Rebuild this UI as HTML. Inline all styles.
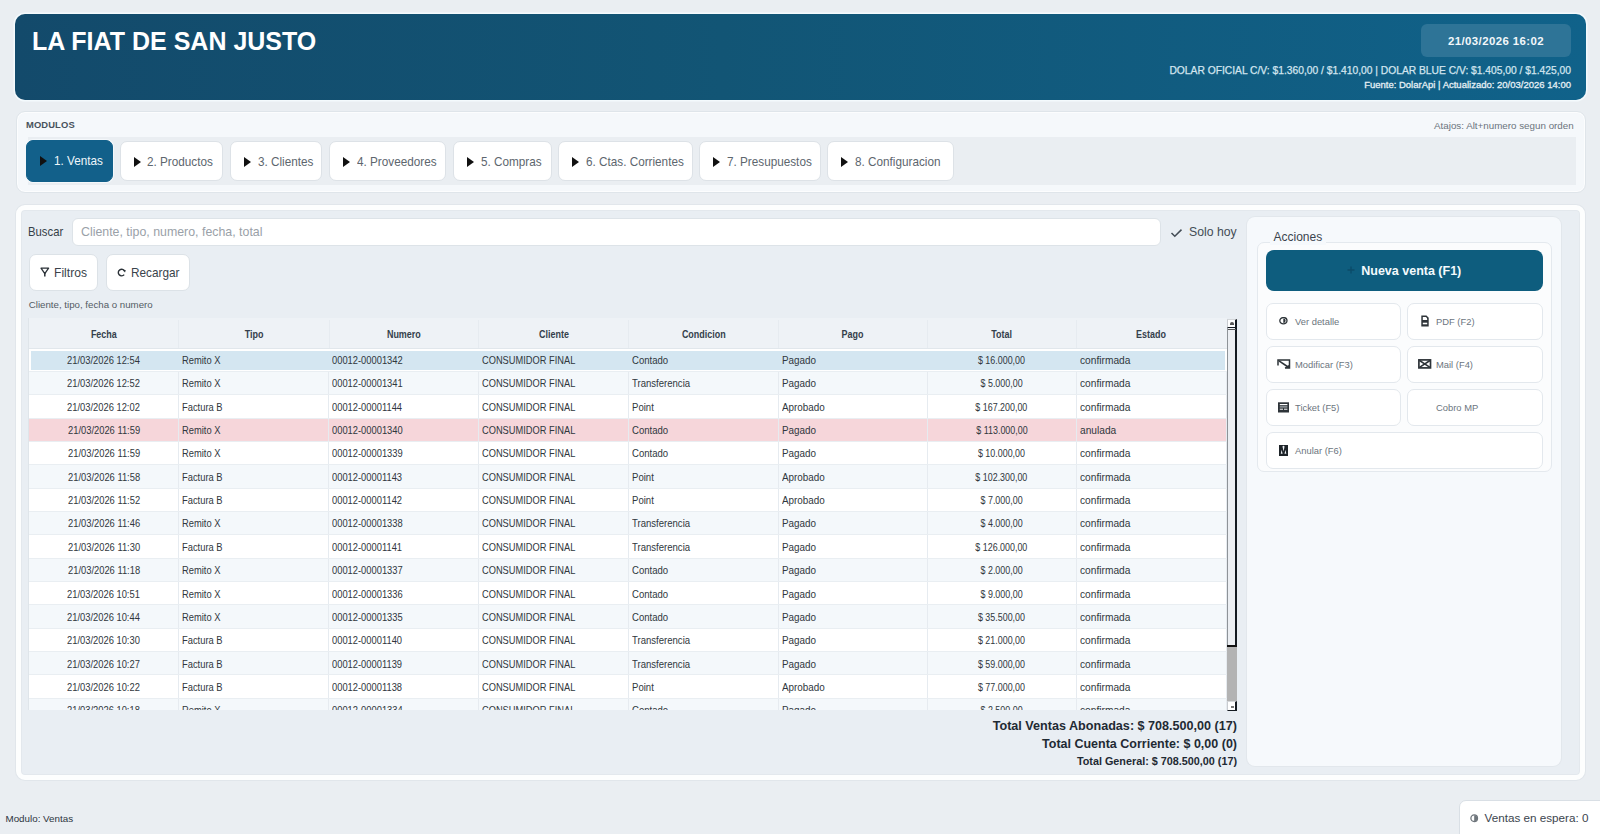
<!DOCTYPE html>
<html><head><meta charset="utf-8">
<style>
*{box-sizing:border-box;margin:0;padding:0}
html,body{width:1600px;height:834px;overflow:hidden}
body{background:#eaeef2;font-family:"Liberation Sans",sans-serif;position:relative;color:#333}
.abs{position:absolute}
#hdr{left:15px;top:13.5px;width:1571px;height:86px;border-radius:10px;
 background:linear-gradient(90deg,#134a6b 0%,#125575 45%,#10628a 100%);
 box-shadow:0 0 0 1.5px #f4fafd}
#title{left:32px;top:26px;font-size:25px;font-weight:700;color:#fff;white-space:nowrap;line-height:30px}
#datebox{left:1421px;top:24px;width:150px;height:33px;padding-top:1px;border-radius:6px;background:#2e7497;
 color:#f3f8fb;font-weight:700;font-size:11.4px;letter-spacing:0.42px;text-align:center;line-height:33px}
#dolar{right:29px;top:65px;font-size:10.28px;font-weight:400;color:#d3e5ef;-webkit-text-stroke:0.25px #d3e5ef;white-space:nowrap;line-height:12px}
#fuente{right:29px;top:79px;font-size:9.5px;font-weight:400;color:#e4eff5;-webkit-text-stroke:0.3px #e4eff5;white-space:nowrap;line-height:11px}

#mod{left:15.5px;top:111px;width:1570px;height:82px;border-radius:9px;background:#f5f8fb;border:1px solid #dfe5ea;box-shadow:inset 0 0 0 1px #fcfdfe}
#modlbl{left:26px;top:119.2px;font-size:9.4px;font-weight:700;color:#48525c;letter-spacing:.12px;line-height:11px}
#atajos{left:1434px;top:120px;font-size:9.8px;color:#6b747d;line-height:11px;white-space:nowrap}
#strip{left:28px;top:137px;width:1548px;height:48px;background:#eaeef2}
.tab{position:absolute;top:140.5px;height:40px;border-radius:7px;background:#fff;border:1px solid #dde2e7;
 font-size:12.9px;color:#5d666e;line-height:39px;white-space:nowrap}
.tab > span:last-child{transform:scaleX(0.91);transform-origin:0 50%}
.tab .tri{position:absolute;top:15px;width:0;height:0;border-top:5px solid transparent;border-bottom:5px solid transparent;border-left:7px solid #111}
.tab.on{background:#12608a;border-color:#12608a;color:#eef6fa;top:140px;height:41.5px;line-height:40px;box-shadow:0 0 0 1px #f4f8fb}

#main{left:16px;top:205px;width:1569px;height:575px;border-radius:9px;background:#e9eef3;border:5px solid #fdfefe;box-shadow:0 0 0 1px #e1e6eb,inset 0 0 0 1px #e3e8ed}

#search{left:72px;top:217.5px;width:1089px;height:28.5px;border-radius:6px;background:#fff;border:1px solid #dde3e8;
 font-size:13.3px;color:#9aa1a8;line-height:26.5px;padding-left:8px;white-space:nowrap}
#search span{display:inline-block;transform:scaleX(0.93);transform-origin:0 50%}
#buscar{left:27.5px;top:223.5px;font-size:13.3px;color:#353f48;line-height:16px;transform:scaleX(0.85);transform-origin:0 50%}
#solo{left:1189px;top:224.5px;font-size:12.5px;color:#434c55;line-height:15px;white-space:nowrap;transform:scaleX(0.98);transform-origin:0 50%}
.btn{position:absolute;background:#fff;border:1px solid #dce2e7;border-radius:7px;white-space:nowrap}
#filtros{left:29px;top:254px;width:68.5px;height:37px}
#recargar{left:106px;top:254px;width:84px;height:37px}
.btxt{position:absolute;font-size:12.9px;color:#3a434b;line-height:15px;transform-origin:0 50%}
#helper{left:28.8px;top:299.3px;font-size:9.7px;color:#535b63;line-height:11px;white-space:nowrap}
#tbl{background:#fff;border-left:1px solid #dfe5ea}
#thead{background:#eef2f6;border-bottom:1px solid #e1e7ec}
.th{position:absolute;top:327.5px;font-size:10.3px;font-weight:700;color:#34404b;text-align:center;line-height:14px;transform:scaleX(0.87)}
.row{position:absolute;left:0;width:1197.6px;height:23.35px;background:#fff;border-bottom:1px solid #e9eef2}
.row.odd{background:#f4f8fb}
.row.anu{background:#f6d6da}
.row.sel{background:#fff}
.row.sel::before{content:"";position:absolute;left:2px;right:2px;top:2.5px;bottom:1px;background:#d4e6f1}
.td{position:absolute;top:0;height:22.35px;padding-top:5.5px;font-size:10.4px;color:#30373d;line-height:14px;padding-left:3.3px;white-space:nowrap}
.td{border-right:1px solid #e6ebf0}
.sel .td{border-right-color:transparent}
.td span{display:inline-block;transform:scaleX(0.9);transform-origin:0 50%}
.td.c span{transform-origin:50% 50%}
.td.c{text-align:center;padding-left:0}
.vsep{position:absolute;width:1px;background:#e6ebf0}
#sbar{left:1227px;top:318.5px;width:10px;height:392px;background:#eceff3;border-left:1.2px solid #8e9398;border-right:2px solid #141a20}
.sbox{position:absolute;left:1227px;width:10px;height:9.3px;background:#fff;border-left:1px solid #c9ccd0;border-top:1px solid #d5d8db;border-right:2px solid #141a20;border-bottom:1.8px solid #141a20}
#sthumb{left:1227px;top:647px;width:10px;height:53.5px;background:#b3b3b3}
#totals{right:363px;top:717px;text-align:right;font-weight:700;color:#1f2a33;white-space:nowrap}
#acc{left:1247px;top:217px;width:314px;height:549px;border-radius:8px;background:#f6f9fc;box-shadow:0 0 0 1px #e2e7ec}
#accfr{left:1257px;top:242px;width:295px;height:230px;border-radius:7px;background:#fbfcfd;border:1px solid #e4e9ee}
#acclbl{left:1269.5px;top:228.5px;padding:0 4px;background:#f6f9fc;font-size:12px;color:#3b454e;line-height:16px}
#nueva{left:1266px;top:250px;width:276.5px;height:41px;border-radius:8px;background:#0e5d7e;color:#f4fafd;font-weight:700;font-size:12.5px;line-height:43px;text-align:center;padding-left:14px}
.ab{position:absolute;height:37px;background:#fff;border:1px solid #e3e8ed;border-radius:7px;font-size:9.4px;color:#6c757e;line-height:35px;white-space:nowrap}
.ab span{position:absolute;left:28px}
#modulo{left:5.5px;top:813px;font-size:9.8px;color:#2c353e;line-height:11px}
#espera{left:1458.5px;top:799.5px;width:150px;height:50px;border-radius:7px;background:#fff;border:1px solid #d9dfe5}
#esptxt{left:1484.5px;top:811px;font-size:11.7px;color:#3c454e;line-height:14px;white-space:nowrap}
</style></head><body>
<div id="hdr" class="abs"></div>
<div id="title" class="abs">LA FIAT DE SAN JUSTO</div>
<div id="datebox" class="abs">21/03/2026 16:02</div>
<div id="dolar" class="abs">DOLAR OFICIAL C/V: $1.360,00 / $1.410,00 | DOLAR BLUE C/V: $1.405,00 / $1.425,00</div>
<div id="fuente" class="abs">Fuente: DolarApi | Actualizado: 20/03/2026 14:00</div>

<div id="mod" class="abs"></div>
<div id="modlbl" class="abs">MODULOS</div>
<div id="atajos" class="abs">Atajos: Alt+numero segun orden</div>
<div id="strip" class="abs"></div>
<div class="tab on" style="left:26px;width:87px"><span class="tri" style="left:13px;top:15px"></span><span style="position:absolute;left:27px">1. Ventas</span></div>
<div class="tab" style="left:120px;width:103px"><span class="tri" style="left:13px"></span><span style="position:absolute;left:26px">2. Productos</span></div>
<div class="tab" style="left:230px;width:92px"><span class="tri" style="left:13px"></span><span style="position:absolute;left:27px">3. Clientes</span></div>
<div class="tab" style="left:329px;width:117px"><span class="tri" style="left:13px"></span><span style="position:absolute;left:27px">4. Proveedores</span></div>
<div class="tab" style="left:453px;width:99px"><span class="tri" style="left:13px"></span><span style="position:absolute;left:27px">5. Compras</span></div>
<div class="tab" style="left:558px;width:135px"><span class="tri" style="left:13px"></span><span style="position:absolute;left:27px">6. Ctas. Corrientes</span></div>
<div class="tab" style="left:699px;width:122px"><span class="tri" style="left:13px"></span><span style="position:absolute;left:27px">7. Presupuestos</span></div>
<div class="tab" style="left:827px;width:127px"><span class="tri" style="left:13px"></span><span style="position:absolute;left:27px">8. Configuracion</span></div>

<div id="main" class="abs"></div>

<div id="buscar" class="abs">Buscar</div>
<div id="search" class="abs"><span>Cliente, tipo, numero, fecha, total</span></div>
<svg class="abs" style="left:1170px;top:228px" width="13" height="10" viewBox="0 0 13 10"><path d="M1.5 5 L4.8 8.3 L11.5 1.6" fill="none" stroke="#434c55" stroke-width="1.5"/></svg>
<div id="solo" class="abs">Solo hoy</div>
<div id="filtros" class="btn"></div>
<svg class="abs" style="left:40px;top:267px" width="10" height="10" viewBox="0 0 10 10"><path d="M1 1.2 H8.6 L4.8 6.6 Z" fill="none" stroke="#2a3137" stroke-width="1.3" stroke-linejoin="round"/><path d="M4.8 6 V9.5" stroke="#2a3137" stroke-width="1.5"/></svg>
<div class="btxt abs" style="left:53.5px;top:265px;transform:scaleX(0.94)">Filtros</div>
<div id="recargar" class="btn"></div>
<svg class="abs" style="left:117px;top:267.5px" width="10" height="9" viewBox="0 0 10 9"><path d="M7.6 3.2 A3.3 3.3 0 1 0 7.2 6.6" fill="none" stroke="#2a3137" stroke-width="1.4"/><path d="M5.6 1.5 L8.8 2.2 L8 4.6 Z" fill="#2a3137"/></svg>
<div class="btxt abs" style="left:130.5px;top:265px;transform:scaleX(0.915)">Recargar</div>
<div id="helper" class="abs">Cliente, tipo, fecha o numero</div>
<div class="abs" id="tbl" style="left:28.0px;top:317.5px;width:1198.5px;height:392.70000000000005px"></div>
<div class="abs" id="thead" style="left:29.0px;top:317.5px;width:1197.5px;height:31.0px"></div>
<div class="th" style="left:29.0px;width:149.7px">Fecha</div>
<div class="th" style="left:178.7px;width:150.3px">Tipo</div>
<div class="th" style="left:329.0px;width:149.7px">Numero</div>
<div class="th" style="left:478.7px;width:150.0px">Cliente</div>
<div class="th" style="left:628.7px;width:149.6px">Condicion</div>
<div class="th" style="left:778.3px;width:148.9px">Pago</div>
<div class="th" style="left:927.2px;width:149.2px">Total</div>
<div class="th" style="left:1076.4px;width:150.1px">Estado</div>
<div class="abs" style="left:29.0px;top:348.5px;width:1197.5px;height:361.70000000000005px;overflow:hidden">
<div class="row sel" style="top:0.00px">
<div class="td c" style="left:0.0px;width:150.2px"><span style="transform:scaleX(0.9)">21/03/2026 12:54</span></div>
<div class="td" style="left:149.7px;width:150.8px"><span style="transform:scaleX(0.9)">Remito X</span></div>
<div class="td" style="left:300.0px;width:150.2px"><span style="transform:scaleX(0.9)">00012-00001342</span></div>
<div class="td" style="left:449.7px;width:150.5px"><span style="transform:scaleX(0.893)">CONSUMIDOR FINAL</span></div>
<div class="td" style="left:599.7px;width:150.1px"><span style="transform:scaleX(0.92)">Contado</span></div>
<div class="td" style="left:749.3px;width:149.4px"><span style="transform:scaleX(0.95)">Pagado</span></div>
<div class="td c" style="left:898.2px;width:149.7px"><span style="transform:scaleX(0.856)">$ 16.000,00</span></div>
<div class="td" style="left:1047.4px;width:150.6px"><span style="transform:scaleX(0.98)">confirmada</span></div>
</div>
<div class="row odd" style="top:23.35px">
<div class="td c" style="left:0.0px;width:150.2px"><span style="transform:scaleX(0.9)">21/03/2026 12:52</span></div>
<div class="td" style="left:149.7px;width:150.8px"><span style="transform:scaleX(0.9)">Remito X</span></div>
<div class="td" style="left:300.0px;width:150.2px"><span style="transform:scaleX(0.9)">00012-00001341</span></div>
<div class="td" style="left:449.7px;width:150.5px"><span style="transform:scaleX(0.893)">CONSUMIDOR FINAL</span></div>
<div class="td" style="left:599.7px;width:150.1px"><span style="transform:scaleX(0.92)">Transferencia</span></div>
<div class="td" style="left:749.3px;width:149.4px"><span style="transform:scaleX(0.95)">Pagado</span></div>
<div class="td c" style="left:898.2px;width:149.7px"><span style="transform:scaleX(0.856)">$ 5.000,00</span></div>
<div class="td" style="left:1047.4px;width:150.6px"><span style="transform:scaleX(0.98)">confirmada</span></div>
</div>
<div class="row" style="top:46.70px">
<div class="td c" style="left:0.0px;width:150.2px"><span style="transform:scaleX(0.9)">21/03/2026 12:02</span></div>
<div class="td" style="left:149.7px;width:150.8px"><span style="transform:scaleX(0.9)">Factura B</span></div>
<div class="td" style="left:300.0px;width:150.2px"><span style="transform:scaleX(0.9)">00012-00001144</span></div>
<div class="td" style="left:449.7px;width:150.5px"><span style="transform:scaleX(0.893)">CONSUMIDOR FINAL</span></div>
<div class="td" style="left:599.7px;width:150.1px"><span style="transform:scaleX(0.92)">Point</span></div>
<div class="td" style="left:749.3px;width:149.4px"><span style="transform:scaleX(0.95)">Aprobado</span></div>
<div class="td c" style="left:898.2px;width:149.7px"><span style="transform:scaleX(0.856)">$ 167.200,00</span></div>
<div class="td" style="left:1047.4px;width:150.6px"><span style="transform:scaleX(0.98)">confirmada</span></div>
</div>
<div class="row anu" style="top:70.05px">
<div class="td c" style="left:0.0px;width:150.2px"><span style="transform:scaleX(0.9)">21/03/2026 11:59</span></div>
<div class="td" style="left:149.7px;width:150.8px"><span style="transform:scaleX(0.9)">Remito X</span></div>
<div class="td" style="left:300.0px;width:150.2px"><span style="transform:scaleX(0.9)">00012-00001340</span></div>
<div class="td" style="left:449.7px;width:150.5px"><span style="transform:scaleX(0.893)">CONSUMIDOR FINAL</span></div>
<div class="td" style="left:599.7px;width:150.1px"><span style="transform:scaleX(0.92)">Contado</span></div>
<div class="td" style="left:749.3px;width:149.4px"><span style="transform:scaleX(0.95)">Pagado</span></div>
<div class="td c" style="left:898.2px;width:149.7px"><span style="transform:scaleX(0.856)">$ 113.000,00</span></div>
<div class="td" style="left:1047.4px;width:150.6px"><span style="transform:scaleX(0.98)">anulada</span></div>
</div>
<div class="row" style="top:93.40px">
<div class="td c" style="left:0.0px;width:150.2px"><span style="transform:scaleX(0.9)">21/03/2026 11:59</span></div>
<div class="td" style="left:149.7px;width:150.8px"><span style="transform:scaleX(0.9)">Remito X</span></div>
<div class="td" style="left:300.0px;width:150.2px"><span style="transform:scaleX(0.9)">00012-00001339</span></div>
<div class="td" style="left:449.7px;width:150.5px"><span style="transform:scaleX(0.893)">CONSUMIDOR FINAL</span></div>
<div class="td" style="left:599.7px;width:150.1px"><span style="transform:scaleX(0.92)">Contado</span></div>
<div class="td" style="left:749.3px;width:149.4px"><span style="transform:scaleX(0.95)">Pagado</span></div>
<div class="td c" style="left:898.2px;width:149.7px"><span style="transform:scaleX(0.856)">$ 10.000,00</span></div>
<div class="td" style="left:1047.4px;width:150.6px"><span style="transform:scaleX(0.98)">confirmada</span></div>
</div>
<div class="row odd" style="top:116.75px">
<div class="td c" style="left:0.0px;width:150.2px"><span style="transform:scaleX(0.9)">21/03/2026 11:58</span></div>
<div class="td" style="left:149.7px;width:150.8px"><span style="transform:scaleX(0.9)">Factura B</span></div>
<div class="td" style="left:300.0px;width:150.2px"><span style="transform:scaleX(0.9)">00012-00001143</span></div>
<div class="td" style="left:449.7px;width:150.5px"><span style="transform:scaleX(0.893)">CONSUMIDOR FINAL</span></div>
<div class="td" style="left:599.7px;width:150.1px"><span style="transform:scaleX(0.92)">Point</span></div>
<div class="td" style="left:749.3px;width:149.4px"><span style="transform:scaleX(0.95)">Aprobado</span></div>
<div class="td c" style="left:898.2px;width:149.7px"><span style="transform:scaleX(0.856)">$ 102.300,00</span></div>
<div class="td" style="left:1047.4px;width:150.6px"><span style="transform:scaleX(0.98)">confirmada</span></div>
</div>
<div class="row" style="top:140.10px">
<div class="td c" style="left:0.0px;width:150.2px"><span style="transform:scaleX(0.9)">21/03/2026 11:52</span></div>
<div class="td" style="left:149.7px;width:150.8px"><span style="transform:scaleX(0.9)">Factura B</span></div>
<div class="td" style="left:300.0px;width:150.2px"><span style="transform:scaleX(0.9)">00012-00001142</span></div>
<div class="td" style="left:449.7px;width:150.5px"><span style="transform:scaleX(0.893)">CONSUMIDOR FINAL</span></div>
<div class="td" style="left:599.7px;width:150.1px"><span style="transform:scaleX(0.92)">Point</span></div>
<div class="td" style="left:749.3px;width:149.4px"><span style="transform:scaleX(0.95)">Aprobado</span></div>
<div class="td c" style="left:898.2px;width:149.7px"><span style="transform:scaleX(0.856)">$ 7.000,00</span></div>
<div class="td" style="left:1047.4px;width:150.6px"><span style="transform:scaleX(0.98)">confirmada</span></div>
</div>
<div class="row odd" style="top:163.45px">
<div class="td c" style="left:0.0px;width:150.2px"><span style="transform:scaleX(0.9)">21/03/2026 11:46</span></div>
<div class="td" style="left:149.7px;width:150.8px"><span style="transform:scaleX(0.9)">Remito X</span></div>
<div class="td" style="left:300.0px;width:150.2px"><span style="transform:scaleX(0.9)">00012-00001338</span></div>
<div class="td" style="left:449.7px;width:150.5px"><span style="transform:scaleX(0.893)">CONSUMIDOR FINAL</span></div>
<div class="td" style="left:599.7px;width:150.1px"><span style="transform:scaleX(0.92)">Transferencia</span></div>
<div class="td" style="left:749.3px;width:149.4px"><span style="transform:scaleX(0.95)">Pagado</span></div>
<div class="td c" style="left:898.2px;width:149.7px"><span style="transform:scaleX(0.856)">$ 4.000,00</span></div>
<div class="td" style="left:1047.4px;width:150.6px"><span style="transform:scaleX(0.98)">confirmada</span></div>
</div>
<div class="row" style="top:186.80px">
<div class="td c" style="left:0.0px;width:150.2px"><span style="transform:scaleX(0.9)">21/03/2026 11:30</span></div>
<div class="td" style="left:149.7px;width:150.8px"><span style="transform:scaleX(0.9)">Factura B</span></div>
<div class="td" style="left:300.0px;width:150.2px"><span style="transform:scaleX(0.9)">00012-00001141</span></div>
<div class="td" style="left:449.7px;width:150.5px"><span style="transform:scaleX(0.893)">CONSUMIDOR FINAL</span></div>
<div class="td" style="left:599.7px;width:150.1px"><span style="transform:scaleX(0.92)">Transferencia</span></div>
<div class="td" style="left:749.3px;width:149.4px"><span style="transform:scaleX(0.95)">Pagado</span></div>
<div class="td c" style="left:898.2px;width:149.7px"><span style="transform:scaleX(0.856)">$ 126.000,00</span></div>
<div class="td" style="left:1047.4px;width:150.6px"><span style="transform:scaleX(0.98)">confirmada</span></div>
</div>
<div class="row odd" style="top:210.15px">
<div class="td c" style="left:0.0px;width:150.2px"><span style="transform:scaleX(0.9)">21/03/2026 11:18</span></div>
<div class="td" style="left:149.7px;width:150.8px"><span style="transform:scaleX(0.9)">Remito X</span></div>
<div class="td" style="left:300.0px;width:150.2px"><span style="transform:scaleX(0.9)">00012-00001337</span></div>
<div class="td" style="left:449.7px;width:150.5px"><span style="transform:scaleX(0.893)">CONSUMIDOR FINAL</span></div>
<div class="td" style="left:599.7px;width:150.1px"><span style="transform:scaleX(0.92)">Contado</span></div>
<div class="td" style="left:749.3px;width:149.4px"><span style="transform:scaleX(0.95)">Pagado</span></div>
<div class="td c" style="left:898.2px;width:149.7px"><span style="transform:scaleX(0.856)">$ 2.000,00</span></div>
<div class="td" style="left:1047.4px;width:150.6px"><span style="transform:scaleX(0.98)">confirmada</span></div>
</div>
<div class="row" style="top:233.50px">
<div class="td c" style="left:0.0px;width:150.2px"><span style="transform:scaleX(0.9)">21/03/2026 10:51</span></div>
<div class="td" style="left:149.7px;width:150.8px"><span style="transform:scaleX(0.9)">Remito X</span></div>
<div class="td" style="left:300.0px;width:150.2px"><span style="transform:scaleX(0.9)">00012-00001336</span></div>
<div class="td" style="left:449.7px;width:150.5px"><span style="transform:scaleX(0.893)">CONSUMIDOR FINAL</span></div>
<div class="td" style="left:599.7px;width:150.1px"><span style="transform:scaleX(0.92)">Contado</span></div>
<div class="td" style="left:749.3px;width:149.4px"><span style="transform:scaleX(0.95)">Pagado</span></div>
<div class="td c" style="left:898.2px;width:149.7px"><span style="transform:scaleX(0.856)">$ 9.000,00</span></div>
<div class="td" style="left:1047.4px;width:150.6px"><span style="transform:scaleX(0.98)">confirmada</span></div>
</div>
<div class="row odd" style="top:256.85px">
<div class="td c" style="left:0.0px;width:150.2px"><span style="transform:scaleX(0.9)">21/03/2026 10:44</span></div>
<div class="td" style="left:149.7px;width:150.8px"><span style="transform:scaleX(0.9)">Remito X</span></div>
<div class="td" style="left:300.0px;width:150.2px"><span style="transform:scaleX(0.9)">00012-00001335</span></div>
<div class="td" style="left:449.7px;width:150.5px"><span style="transform:scaleX(0.893)">CONSUMIDOR FINAL</span></div>
<div class="td" style="left:599.7px;width:150.1px"><span style="transform:scaleX(0.92)">Contado</span></div>
<div class="td" style="left:749.3px;width:149.4px"><span style="transform:scaleX(0.95)">Pagado</span></div>
<div class="td c" style="left:898.2px;width:149.7px"><span style="transform:scaleX(0.856)">$ 35.500,00</span></div>
<div class="td" style="left:1047.4px;width:150.6px"><span style="transform:scaleX(0.98)">confirmada</span></div>
</div>
<div class="row" style="top:280.20px">
<div class="td c" style="left:0.0px;width:150.2px"><span style="transform:scaleX(0.9)">21/03/2026 10:30</span></div>
<div class="td" style="left:149.7px;width:150.8px"><span style="transform:scaleX(0.9)">Factura B</span></div>
<div class="td" style="left:300.0px;width:150.2px"><span style="transform:scaleX(0.9)">00012-00001140</span></div>
<div class="td" style="left:449.7px;width:150.5px"><span style="transform:scaleX(0.893)">CONSUMIDOR FINAL</span></div>
<div class="td" style="left:599.7px;width:150.1px"><span style="transform:scaleX(0.92)">Transferencia</span></div>
<div class="td" style="left:749.3px;width:149.4px"><span style="transform:scaleX(0.95)">Pagado</span></div>
<div class="td c" style="left:898.2px;width:149.7px"><span style="transform:scaleX(0.856)">$ 21.000,00</span></div>
<div class="td" style="left:1047.4px;width:150.6px"><span style="transform:scaleX(0.98)">confirmada</span></div>
</div>
<div class="row odd" style="top:303.55px">
<div class="td c" style="left:0.0px;width:150.2px"><span style="transform:scaleX(0.9)">21/03/2026 10:27</span></div>
<div class="td" style="left:149.7px;width:150.8px"><span style="transform:scaleX(0.9)">Factura B</span></div>
<div class="td" style="left:300.0px;width:150.2px"><span style="transform:scaleX(0.9)">00012-00001139</span></div>
<div class="td" style="left:449.7px;width:150.5px"><span style="transform:scaleX(0.893)">CONSUMIDOR FINAL</span></div>
<div class="td" style="left:599.7px;width:150.1px"><span style="transform:scaleX(0.92)">Transferencia</span></div>
<div class="td" style="left:749.3px;width:149.4px"><span style="transform:scaleX(0.95)">Pagado</span></div>
<div class="td c" style="left:898.2px;width:149.7px"><span style="transform:scaleX(0.856)">$ 59.000,00</span></div>
<div class="td" style="left:1047.4px;width:150.6px"><span style="transform:scaleX(0.98)">confirmada</span></div>
</div>
<div class="row" style="top:326.90px">
<div class="td c" style="left:0.0px;width:150.2px"><span style="transform:scaleX(0.9)">21/03/2026 10:22</span></div>
<div class="td" style="left:149.7px;width:150.8px"><span style="transform:scaleX(0.9)">Factura B</span></div>
<div class="td" style="left:300.0px;width:150.2px"><span style="transform:scaleX(0.9)">00012-00001138</span></div>
<div class="td" style="left:449.7px;width:150.5px"><span style="transform:scaleX(0.893)">CONSUMIDOR FINAL</span></div>
<div class="td" style="left:599.7px;width:150.1px"><span style="transform:scaleX(0.92)">Point</span></div>
<div class="td" style="left:749.3px;width:149.4px"><span style="transform:scaleX(0.95)">Aprobado</span></div>
<div class="td c" style="left:898.2px;width:149.7px"><span style="transform:scaleX(0.856)">$ 77.000,00</span></div>
<div class="td" style="left:1047.4px;width:150.6px"><span style="transform:scaleX(0.98)">confirmada</span></div>
</div>
<div class="row odd" style="top:350.25px">
<div class="td c" style="left:0.0px;width:150.2px"><span style="transform:scaleX(0.9)">21/03/2026 10:18</span></div>
<div class="td" style="left:149.7px;width:150.8px"><span style="transform:scaleX(0.9)">Remito X</span></div>
<div class="td" style="left:300.0px;width:150.2px"><span style="transform:scaleX(0.9)">00012-00001334</span></div>
<div class="td" style="left:449.7px;width:150.5px"><span style="transform:scaleX(0.893)">CONSUMIDOR FINAL</span></div>
<div class="td" style="left:599.7px;width:150.1px"><span style="transform:scaleX(0.92)">Contado</span></div>
<div class="td" style="left:749.3px;width:149.4px"><span style="transform:scaleX(0.95)">Pagado</span></div>
<div class="td c" style="left:898.2px;width:149.7px"><span style="transform:scaleX(0.856)">$ 2.500,00</span></div>
<div class="td" style="left:1047.4px;width:150.6px"><span style="transform:scaleX(0.98)">confirmada</span></div>
</div>
</div>
<div class="abs vsep" style="left:178.2px;top:319.5px;height:28.0px"></div>
<div class="abs vsep" style="left:328.5px;top:319.5px;height:28.0px"></div>
<div class="abs vsep" style="left:478.2px;top:319.5px;height:28.0px"></div>
<div class="abs vsep" style="left:628.2px;top:319.5px;height:28.0px"></div>
<div class="abs vsep" style="left:777.8px;top:319.5px;height:28.0px"></div>
<div class="abs vsep" style="left:926.7px;top:319.5px;height:28.0px"></div>
<div class="abs vsep" style="left:1075.9px;top:319.5px;height:28.0px"></div>
<div id="sbar" class="abs"></div>
<div class="sbox" style="top:318.5px"><div style="position:absolute;left:2.3px;top:2px;width:3.5px;height:3px;background:#555;border-radius:2px 2px 0 0"></div></div>
<div class="abs" style="left:1228px;top:328.6px;width:7.6px;height:1.1px;background:#555"></div>
<div class="abs" style="left:1227px;top:644.5px;width:10px;height:2.5px;background:#111"></div>
<div id="sthumb" class="abs"></div>
<div class="sbox" style="top:700.5px;height:10px"><div style="position:absolute;left:3px;top:4px;width:3px;height:2px;background:#777"></div></div>
<div id="totals" class="abs">
<div style="font-size:12.6px;line-height:18px">Total Ventas Abonadas: $ 708.500,00 (17)</div>
<div style="font-size:12.5px;line-height:18px">Total Cuenta Corriente: $ 0,00 (0)</div>
<div style="font-size:10.8px;line-height:17px">Total General: $ 708.500,00 (17)</div>
</div>
<div id="acc" class="abs"></div>
<div id="accfr" class="abs"></div>
<div id="acclbl" class="abs">Acciones</div>
<div id="nueva" class="abs">Nueva venta (F1)</div>
<div class="ab" style="left:1266px;top:302.5px;width:135px"><span>Ver detalle</span></div>
<div class="ab" style="left:1407px;top:302.5px;width:135.5px"><span>PDF (F2)</span></div>
<div class="ab" style="left:1266px;top:345.5px;width:135px"><span>Modificar (F3)</span></div>
<div class="ab" style="left:1407px;top:345.5px;width:135.5px"><span>Mail (F4)</span></div>
<div class="ab" style="left:1266px;top:389px;width:135px"><span>Ticket (F5)</span></div>
<div class="ab" style="left:1407px;top:389px;width:135.5px"><span>Cobro MP</span></div>
<div class="ab" style="left:1266px;top:432px;width:276.5px"><span>Anular (F6)</span></div>

<svg class="abs" style="left:1278.5px;top:316.5px" width="9" height="8" viewBox="0 0 9 8"><ellipse cx="4.4" cy="3.7" rx="3.6" ry="3.1" fill="none" stroke="#2e3439" stroke-width="1.3"/><path d="M4.3 1.4 A2.3 2.3 0 0 1 4.3 6 Z" fill="#2e3439"/></svg>
<svg class="abs" style="left:1420.5px;top:314.5px" width="8" height="12" viewBox="0 0 8 12"><path d="M0.3 0.5 H5.5 L7.7 2.8 V11.4 H0.3 Z" fill="#2e3439"/><path d="M1.8 2 H4.8 A2.2 2.2 0 0 1 6.2 4.4 V4.9 H1.8 Z" fill="#fff"/><rect x="1.8" y="7.7" width="4.4" height="1.6" fill="#fff"/></svg>
<svg class="abs" style="left:1277px;top:358.5px" width="14" height="10" viewBox="0 0 14 10"><path d="M1 6.5 V1 H12.5 V9 H8" fill="none" stroke="#2e3439" stroke-width="1.5"/><path d="M2 1.8 L11.8 8.5" stroke="#2e3439" stroke-width="1.6"/><path d="M12.5 9 L7.5 9 L12.5 5.6 Z" fill="#2e3439"/></svg>
<svg class="abs" style="left:1417.5px;top:358.5px" width="14" height="10" viewBox="0 0 14 10"><rect x="0.9" y="0.9" width="11.6" height="8" fill="none" stroke="#2e3439" stroke-width="1.7"/><path d="M1.5 1.5 L12 8.3 M12 1.5 L1.5 8.3" stroke="#2e3439" stroke-width="1.5"/></svg>
<svg class="abs" style="left:1278px;top:401.5px" width="11" height="11" viewBox="0 0 11 11"><rect x="0" y="0.3" width="11" height="10.2" fill="#2e3439"/><rect x="1.8" y="2" width="7.6" height="1.2" fill="#fff"/><rect x="1.8" y="4.2" width="7.6" height="1.4" fill="#9aa0a5"/><rect x="1.8" y="6.7" width="7.6" height="1" fill="#fff"/><rect x="5" y="6" width="1" height="3.5" fill="#2e3439"/></svg>
<svg class="abs" style="left:1279px;top:444.5px" width="9" height="11" viewBox="0 0 9 11"><rect x="0" y="0" width="9" height="11" fill="#1e2429"/><path d="M3.5 1.8 A1 1 0 0 1 5.5 1.8 L4.6 6.5 Z M1.8 8.7 L2.6 4.8 L3.6 8.7 Z M5.5 8.7 L6.5 4.8 L7.3 8.7 Z" fill="#eef1f5"/></svg>
<svg class="abs" style="left:1347px;top:265.5px" width="8" height="8" viewBox="0 0 8 8"><path d="M4 0.5 V7.5 M0.5 4 H7.5" stroke="#0c4b68" stroke-width="1.3"/></svg>
<div id="modulo" class="abs">Modulo: Ventas</div>
<div id="espera" class="abs"></div>
<svg class="abs" style="left:1470px;top:814px" width="9" height="9" viewBox="0 0 9 9"><circle cx="4.2" cy="4.2" r="3.3" fill="none" stroke="#6e757b" stroke-width="1.3"/><path d="M4.2 1.2 A3 3 0 0 1 4.2 7.2 Z" fill="#6e757b"/></svg>
<div id="esptxt" class="abs">Ventas en espera: 0</div>
</body></html>
